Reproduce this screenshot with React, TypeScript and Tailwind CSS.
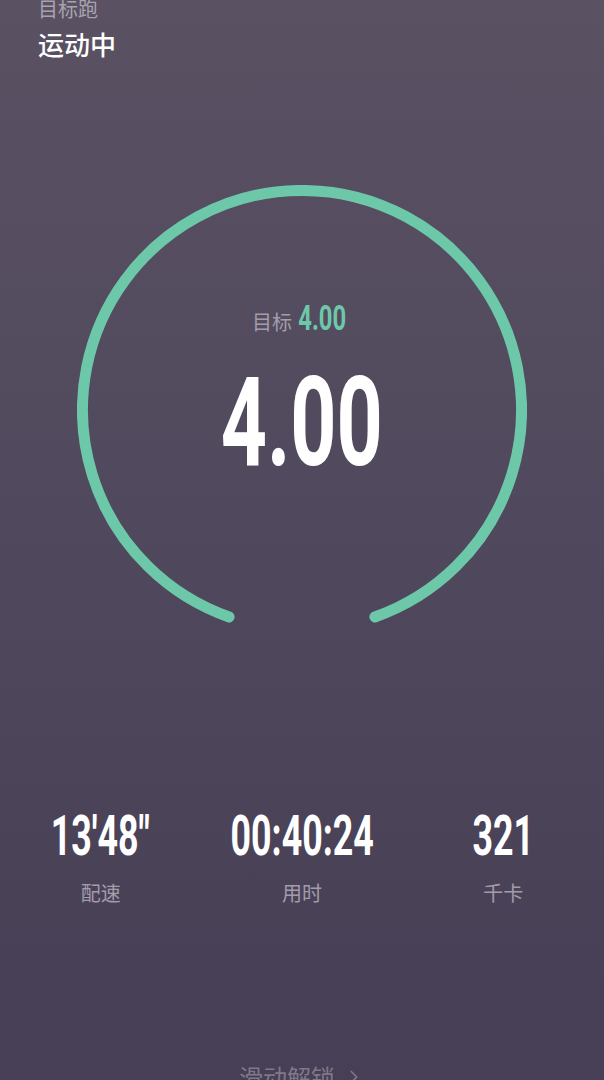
import { ChevronRight } from "lucide-react";

const stats = [
  { value: "13'48\"", label: "配速" },
  { value: "00:40:24", label: "用时" },
  { value: "321", label: "千卡" },
];

function ProgressRing() {
  // 219.5 radius ring, gap of ~19.4deg on each side of the bottom
  return (
    <svg className="absolute inset-0" width="450" height="450" viewBox="0 0 450 450">
      <path
        d="M152.1 432 A219.5 219.5 0 1 1 297.9 432"
        fill="none"
        stroke="#6dc8aa"
        strokeWidth="11"
        strokeLinecap="round"
      />
    </svg>
  );
}

export default function App() {
  return (
    <div className="relative w-full h-[1080px] overflow-hidden flex flex-col bg-gradient-to-b from-[#5a5163] to-[#463f55] font-['Noto_Sans_CJK_SC',sans-serif]">
      {/* Header */}
      <div className="px-[38px]">
        <div className="-mt-[3px] text-[20px] leading-[24px] text-[#a8a2b0]">目标跑</div>
        <div className="mt-[8px] text-[26px] leading-[30px] font-medium text-white">运动中</div>
      </div>

      {/* Ring */}
      <div className="relative mt-[126px] mx-auto w-[450px] h-[450px] shrink-0">
        <ProgressRing />
        <div className="relative flex flex-col items-center">
          <div className="mt-[120px] flex items-baseline gap-[6px] -translate-x-[3px]">
            <span className="text-[20px] leading-[28px] text-[#a39dab]">目标</span>
            <span className="w-[48px] flex justify-center">
              <span className="inline-block scale-x-[0.68] font-['Roboto',sans-serif] font-bold text-[35px] leading-[28px] text-[#6dc8aa]">
                4.00
              </span>
            </span>
          </div>
          <div className="mt-[37px] w-[160px] flex justify-center">
            <span className="inline-block scale-x-[0.65] font-['Roboto',sans-serif] font-bold text-[124px] leading-[100px] text-white">
              4.00
            </span>
          </div>
        </div>
      </div>

      {/* Stats */}
      <div className="mt-[179px] grid grid-cols-3">
        {stats.map((s) => (
          <div key={s.label} className="flex flex-col items-center">
            <div className="w-[140px] flex justify-center">
              <span className="inline-block scale-x-[0.65] whitespace-nowrap font-['Roboto',sans-serif] font-bold text-[55px] leading-[44px] text-white">
                {s.value}
              </span>
            </div>
            <div className="mt-[23px] text-[20px] leading-[24px] text-[#a29cab]">{s.label}</div>
          </div>
        ))}
      </div>

      {/* Slide to unlock */}
      <div className="mt-[156px] flex items-center justify-center gap-[8px] text-[#7f7889]">
        <span className="text-[24px] leading-[32px]">滑动解锁</span>
        <ChevronRight size={22} strokeWidth={1.8} />
      </div>
    </div>
  );
}
